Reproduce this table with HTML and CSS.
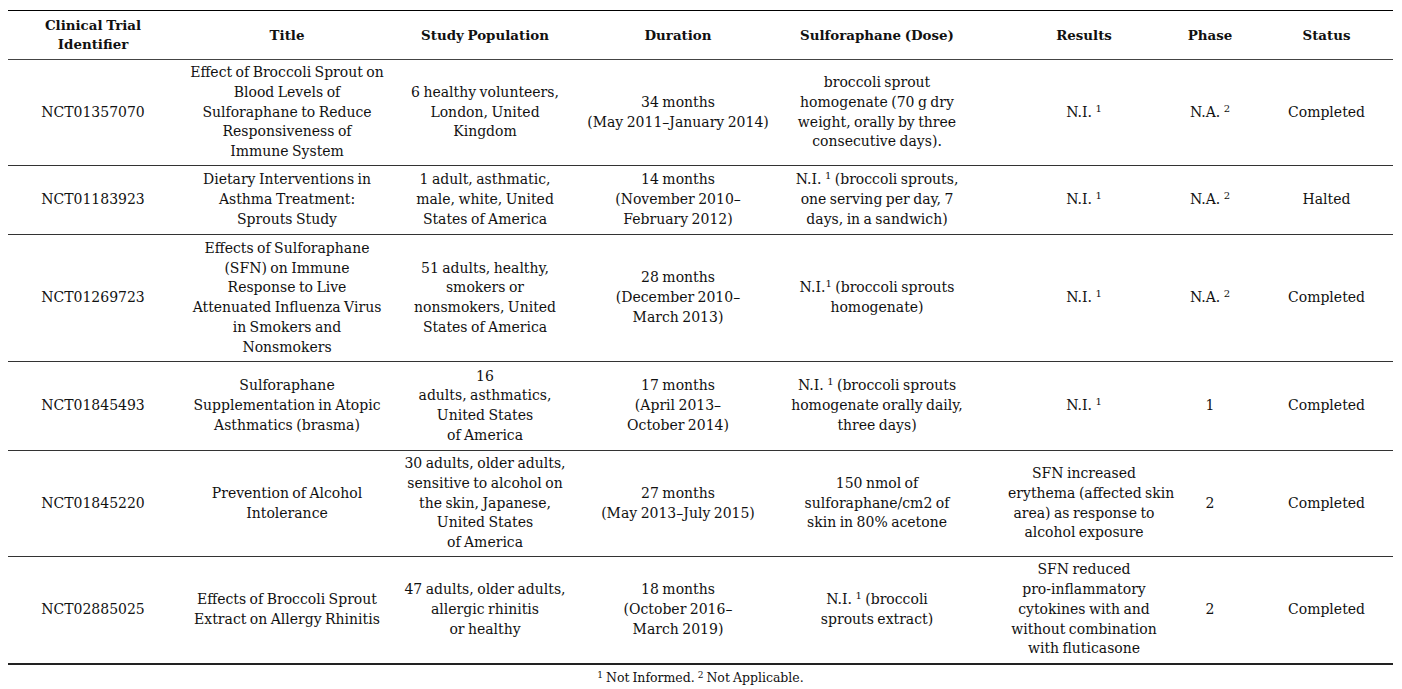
FILE: index.html
```html
<!DOCTYPE html>
<html lang="en">
<head>
<meta charset="utf-8">
<title>Clinical trials of sulforaphane</title>
<link rel="stylesheet" href="styles.css">
</head>
<body>
<div class="wrap">
<table class="trials">
<colgroup>
<col class="c1"><col class="c2"><col class="c3"><col class="c4"><col class="c5"><col class="c6"><col class="c7"><col class="c8">
</colgroup>
<thead>
<tr class="h">
<th>Clinical Trial<br>Identifier</th>
<th>Title</th>
<th>Study Population</th>
<th>Duration</th>
<th>Sulforaphane (Dose)</th>
<th class="res">Results</th>
<th>Phase</th>
<th>Status</th>
</tr>
</thead>
<tbody>
<tr class="r1">
<td>NCT01357070</td>
<td>Effect of Broccoli Sprout on<br>Blood Levels of<br>Sulforaphane to Reduce<br>Responsiveness of<br>Immune System</td>
<td>6 healthy volunteers,<br>London, United<br>Kingdom</td>
<td>34 months<br>(May 2011–January 2014)</td>
<td>broccoli sprout<br>homogenate (70 g dry<br>weight, orally by three<br>consecutive days).</td>
<td class="res">N.I. <sup>1</sup></td>
<td>N.A. <sup>2</sup></td>
<td>Completed</td>
</tr>
<tr class="r2">
<td>NCT01183923</td>
<td>Dietary Interventions in<br>Asthma Treatment:<br>Sprouts Study</td>
<td>1 adult, asthmatic,<br>male, white, United<br>States of America</td>
<td>14 months<br>(November 2010–<br>February 2012)</td>
<td>N.I. <sup>1</sup> (broccoli sprouts,<br>one serving per day, 7<br>days, in a sandwich)</td>
<td class="res">N.I. <sup>1</sup></td>
<td>N.A. <sup>2</sup></td>
<td>Halted</td>
</tr>
<tr class="r3">
<td>NCT01269723</td>
<td>Effects of Sulforaphane<br>(SFN) on Immune<br>Response to Live<br>Attenuated Influenza Virus<br>in Smokers and<br>Nonsmokers</td>
<td>51 adults, healthy,<br>smokers or<br>nonsmokers, United<br>States of America</td>
<td>28 months<br>(December 2010–<br>March 2013)</td>
<td>N.I.<sup>1</sup> (broccoli sprouts<br>homogenate)</td>
<td class="res">N.I. <sup>1</sup></td>
<td>N.A. <sup>2</sup></td>
<td>Completed</td>
</tr>
<tr class="r4">
<td>NCT01845493</td>
<td>Sulforaphane<br>Supplementation in Atopic<br>Asthmatics (brasma)</td>
<td>16<br>adults, asthmatics,<br>United States<br>of America</td>
<td>17 months<br>(April 2013–<br>October 2014)</td>
<td>N.I. <sup>1</sup> (broccoli sprouts<br>homogenate orally daily,<br>three days)</td>
<td class="res">N.I. <sup>1</sup></td>
<td>1</td>
<td>Completed</td>
</tr>
<tr class="r5">
<td>NCT01845220</td>
<td>Prevention of Alcohol<br>Intolerance</td>
<td>30 adults, older adults,<br>sensitive to alcohol on<br>the skin, Japanese,<br>United States<br>of America</td>
<td>27 months<br>(May 2013–July 2015)</td>
<td>150 nmol of<br>sulforaphane/cm2 of<br>skin in 80% acetone</td>
<td class="res">SFN increased<br>erythema (affected skin<br>area) as response to<br>alcohol exposure</td>
<td>2</td>
<td>Completed</td>
</tr>
<tr class="r6">
<td>NCT02885025</td>
<td>Effects of Broccoli Sprout<br>Extract on Allergy Rhinitis</td>
<td>47 adults, older adults,<br>allergic rhinitis<br>or healthy</td>
<td>18 months<br>(October 2016–<br>March 2019)</td>
<td>N.I. <sup>1</sup> (broccoli<br>sprouts extract)</td>
<td class="res">SFN reduced<br>pro-inflammatory<br>cytokines with and<br>without combination<br>with fluticasone</td>
<td>2</td>
<td>Completed</td>
</tr>
</tbody>
</table>
<p class="note"><sup>1</sup> Not Informed. <sup>2</sup> Not Applicable.</p>
</div>
</body>
</html>
```

FILE: styles.css
```css
html, body {
  margin: 0;
  padding: 0;
  background: #ffffff;
}

.wrap {
  padding: 10px 9px 0 8px;
  font-family: "DejaVu Serif", "Liberation Serif", serif;
  color: #111;
}

.trials {
  width: 1385px;
  table-layout: fixed;
  border-collapse: collapse;
  border-top: 1px solid #000;
  border-bottom: 2px solid #222;
  font-size: 14px;
  word-spacing: -1px;
  line-height: 19.75px;
}

.c1 { width: 170px; }
.c2 { width: 218px; }
.c3 { width: 178px; }
.c4 { width: 208px; }
.c5 { width: 190px; }
.c6 { width: 188px; }
.c7 { width: 100px; }
.c8 { width: 133px; }

.trials th,
.trials td {
  padding: 0;
  text-align: center;
  vertical-align: middle;
  white-space: nowrap;
}

.trials th {
  font-weight: bold;
  font-size: 13.4px;
  border-bottom: 1px solid #444;
  line-height: 19px;
}

.trials td {
  border-bottom: 1px solid #333;
}

.trials .res {
  padding-left: 36px;
}

.h { height: 49px; }
.r1 { height: 106px; }
.r2 { height: 69px; }
.r3 { height: 127px; }
.r4 { height: 89px; }
.r5 { height: 106px; }
.r6 { height: 107px; }

.trials sup {
  font-size: 10px;
  line-height: 0;
  vertical-align: 5px;
}

.note {
  margin: 5px 0 0 0;
  text-align: center;
  font-size: 12.5px;
  word-spacing: -1px;
  line-height: 16px;
  color: #111;
}

.note sup {
  font-size: 9px;
  line-height: 0;
  vertical-align: 4px;
}
```
